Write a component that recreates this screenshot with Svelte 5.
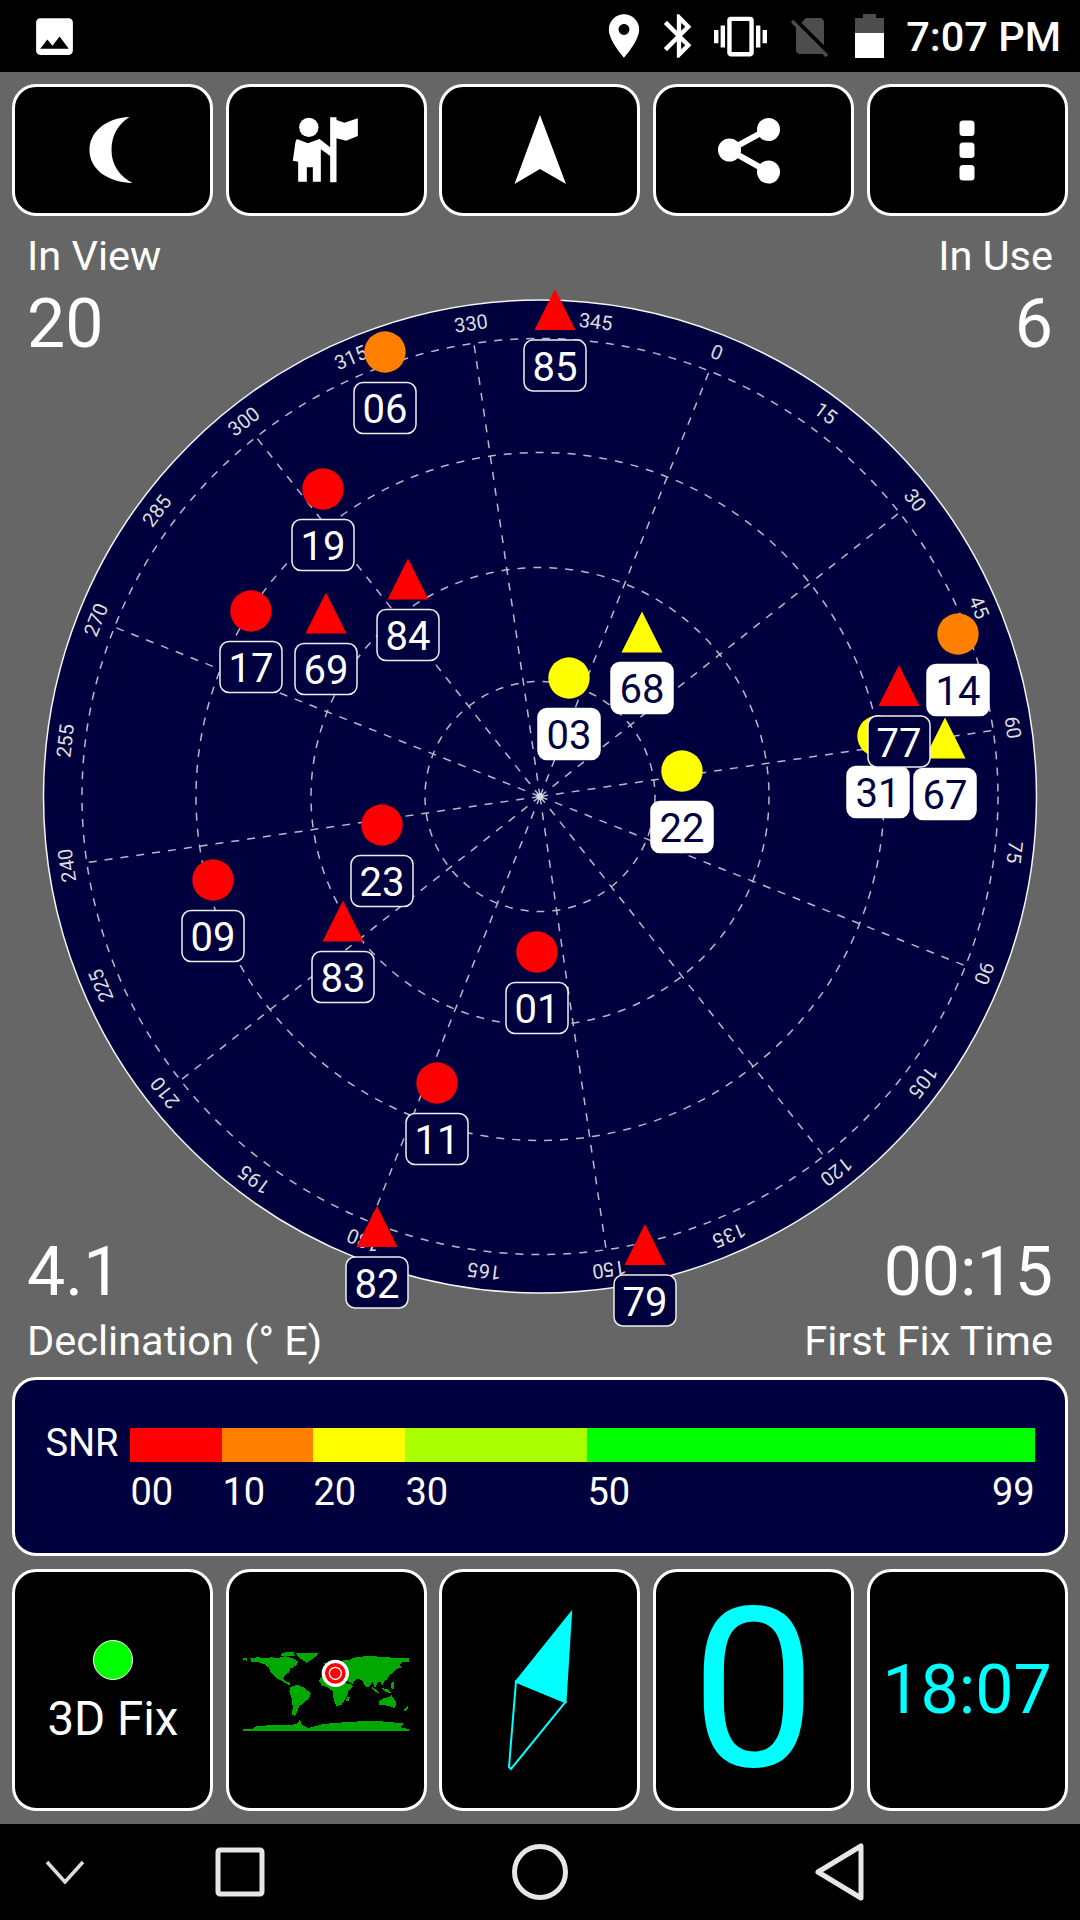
<script>
    const cx = 540;
    const cy = 796.5;
    const rot = 21.7;

    const rings = [115, 229, 344, 458];
    const spokes = Array.from({ length: 12 }, (_, i) => i * 30);
    const degrees = Array.from({ length: 24 }, (_, i) => i * 15);

    // shape: c = gps circle, t = glonass triangle. used = white label
    const sats = [
        { id: "06", x: 385, y: 352, c: "#ff8000", shape: "c" },
        { id: "85", x: 555, y: 309.5, c: "#ff0000", shape: "t" },
        { id: "19", x: 323, y: 489, c: "#ff0000", shape: "c" },
        { id: "17", x: 251, y: 611, c: "#ff0000", shape: "c" },
        { id: "69", x: 326, y: 613, c: "#ff0000", shape: "t" },
        { id: "84", x: 408, y: 579, c: "#ff0000", shape: "t" },
        { id: "68", x: 642, y: 632, c: "#ffff00", shape: "t", used: true },
        { id: "03", x: 569, y: 678, c: "#ffff00", shape: "c", used: true },
        { id: "22", x: 682, y: 771, c: "#ffff00", shape: "c", used: true },
        { id: "14", x: 958, y: 634, c: "#ff8000", shape: "c", used: true },
        { id: "31", x: 878, y: 736, c: "#ffff00", shape: "c", used: true },
        { id: "67", x: 945, y: 738, c: "#ffff00", shape: "t", used: true },
        { id: "77", x: 899, y: 685.5, c: "#ff0000", shape: "t" },
        { id: "23", x: 382, y: 825, c: "#ff0000", shape: "c" },
        { id: "09", x: 213, y: 880, c: "#ff0000", shape: "c" },
        { id: "83", x: 343, y: 921, c: "#ff0000", shape: "t" },
        { id: "01", x: 537, y: 952, c: "#ff0000", shape: "c" },
        { id: "11", x: 437, y: 1083, c: "#ff0000", shape: "c" },
        { id: "82", x: 377, y: 1226.5, c: "#ff0000", shape: "t" },
        { id: "79", x: 645, y: 1244.5, c: "#ff0000", shape: "t" }
    ];

    function tri(s) {
        return `${s.x},${s.y - 20.5} ${s.x - 20.5},${s.y + 20.5} ${s.x + 20.5},${s.y + 20.5}`;
    }

    const snr = [
        { label: "00", color: "#ff0000" },
        { label: "10", color: "#ff8000" },
        { label: "20", color: "#ffff00" },
        { label: "30", color: "#aaff00" },
        { label: "50", color: "#00ff00", end: "99" }
    ];

    const land = [
        "30,30 55,28 75,30 95,28 110,30 130,27 150,28 165,35 175,42 170,50 160,58 150,62 148,72 140,78 132,85 130,92 138,100 148,104 150,112 140,108 128,100 112,92 100,82 90,72 88,60 72,48 52,42 35,42",
        "168,14 235,14 228,25 215,35 200,45 190,38 178,30 172,22",
        "128,14 160,12 165,24 150,24 135,26 122,22",
        "10,30 22,30 22,38 10,36",
        "150,118 170,110 190,118 212,135 208,150 190,165 178,175 170,195 165,204 157,200 158,175 155,150 148,132",
        "252,45 275,42 330,35 345,28 385,24 420,26 470,30 506,30 506,42 488,42 478,50 485,60 470,62 462,72 450,80 440,95 432,100 428,112 420,100 412,105 405,120 398,100 388,115 378,118 368,100 358,92 345,95 338,108 322,100 310,90 270,90",
        "240,90 255,85 285,100 330,108 338,115 325,130 318,150 305,170 290,174 282,160 278,130 262,118 245,112 238,100",
        "322,148 330,145 326,160 318,158",
        "418,160 430,150 445,148 455,142 470,165 465,180 448,175 430,170 415,172",
        "395,115 408,125 420,135 412,135 398,125",
        "425,120 445,125 455,135 435,132",
        "452,105 462,102 462,125 455,122",
        "490,185 503,175 505,180 495,192",
        "45,236 100,230 150,232 172,226 180,214 185,230 205,240 250,228 320,222 400,218 490,226 482,238 506,243 506,249 10,249 10,243 40,242"
    ];
</script>

<div class="screen">
    <header class="status">
        <svg class="ic-image" viewBox="0 0 24 24"><path fill="#fff" d="M21 19V5c0-1.1-.9-2-2-2H5c-1.1 0-2 .9-2 2v14c0 1.1.9 2 2 2h14c1.1 0 2-.9 2-2zM8.5 13.5l2.5 3.01L14.5 12l4.5 6H5l3.5-4.5z"/></svg>
        <div class="status-right">
            <svg class="ic-pin" viewBox="0 0 24 24"><path fill="#fff" d="M12 2C8.13 2 5 5.13 5 9c0 5.25 7 13 7 13s7-7.75 7-13c0-3.87-3.13-7-7-7zm0 9.5c-1.38 0-2.5-1.12-2.5-2.5s1.12-2.5 2.5-2.5 2.5 1.12 2.5 2.5-1.12 2.5-2.5 2.5z"/></svg>
            <svg class="ic-bt" viewBox="0 0 24 24"><path fill="#fff" d="M17.71 7.71L12 2h-1v7.59L6.41 5 5 6.41 10.59 12 5 17.59 6.41 19 11 14.41V22h1l5.71-5.71-4.3-4.29 4.3-4.29zM13 5.83l1.88 1.88L13 9.59V5.83zm1.88 10.46L13 18.17v-3.76l1.88 1.88z"/></svg>
            <svg class="ic-vib" viewBox="0 0 24 24"><path fill="#fff" d="M0 15h2V9H0v6zm3 2h2V7H3v10zm19-8v6h2V9h-2zm-3 8h2V7h-2v10zM16.5 3h-9C6.67 3 6 3.67 6 4.5v15c0 .83.67 1.5 1.5 1.5h9c.83 0 1.5-.67 1.5-1.5v-15c0-.83-.67-1.5-1.5-1.5zM16 19H8V5h8v14z"/></svg>
            <svg class="ic-sim" viewBox="0 0 24 24"><path fill="#4d4d4d" d="M18.99 5c0-1.1-.89-2-1.99-2h-7L7.66 5.34 19 16.68 18.99 5zM3.65 3.88L2.38 5.15 5 7.77V19c0 1.1.9 2 2 2h10.01c.35 0 .67-.1.96-.26l1.88 1.88 1.27-1.27L3.65 3.88z"/></svg>
            <svg class="ic-batt" viewBox="0 0 29 44"><path fill="#4d4d4d" d="M8 0h13v4h8v15H0V4h8z"/><rect y="19" width="29" height="25" fill="#fff"/></svg>
            <span class="clock">7:07 PM</span>
        </div>
    </header>

    <nav class="tiles top">
        <button class="tile">
            <svg width="80" height="80" viewBox="72.500 110 80 80"><path fill="#fff" d="M129 117C105 118 89 132 89 150C89 168 105 182 132 183C119 176 111 165 111 150C111 135 118 124 129 117Z"/></svg>
        </button>
        <button class="tile">
            <svg width="80" height="80" viewBox="199.500 120 240 240"><circle cx="268" cy="172" r="29" fill="#fff"/><path fill="#fff" d="M232 207L265 220L300 207L332 232V258L304 238V335H280V292H262V335H236V275L220 272L228 215ZM332 142H351V150L375 158L415 145V198L380 212L351 205V337H332Z"/></svg>
        </button>
        <button class="tile">
            <svg width="80" height="80" viewBox="500 110 80 80"><path fill="#fff" d="M540 115L566 184L540 169L514.500 184Z"/></svg>
        </button>
        <button class="tile">
            <svg width="80" height="80" viewBox="713.500 110 80 80"><path stroke="#fff" stroke-width="6" fill="none" d="M768 129L729 150L768 172"/><circle cx="768" cy="129.500" r="11.500" fill="#fff"/><circle cx="729" cy="150" r="11.500" fill="#fff"/><circle cx="768" cy="172" r="11.500" fill="#fff"/></svg>
        </button>
        <button class="tile">
            <svg width="80" height="80" viewBox="927 110 80 80"><rect x="959.500" y="120.500" width="15" height="15.500" rx="3.500" fill="#fff"/><rect x="959.500" y="142.500" width="15" height="15.500" rx="3.500" fill="#fff"/><rect x="959.500" y="165" width="15" height="15.500" rx="3.500" fill="#fff"/></svg>
        </button>
    </nav>

    <section class="sky">
        <svg class="plot" viewBox="0 216 1080 1161">
            <circle {cx} {cy} r="496.5" fill="#00003f" stroke="#f4f4f4" stroke-width="1.5"/>
            {#each rings as r}
                <circle {cx} {cy} {r} class="grid"/>
            {/each}
            {#each spokes as a}
                <line x1={cx} y1={cy} x2={cx} y2={cy - 458} class="grid" transform="rotate({a + rot} {cx} {cy})"/>
            {/each}
            <circle {cx} {cy} r="3.5" fill="#d8d8e0"/>
            {#each degrees as d}
                <text x={cx} y={cy - 478} class="deg" transform="rotate({d + rot} {cx} {cy})">{d}</text>
            {/each}
            {#each sats as s}
                {#if s.shape === "c"}
                    <circle cx={s.x} cy={s.y} r="20.7" fill={s.c}/>
                {:else}
                    <polygon points={tri(s)} fill={s.c}/>
                {/if}
                <rect x={s.x - 31} y={s.y + 30.5} width="62" height="51" rx="9" class="badge" class:used={s.used}/>
                <text x={s.x} y={s.y + 71} class="prn" class:used={s.used}>{s.id}</text>
            {/each}
        </svg>
        <div class="readouts">
            <div class="pair">
                <div>
                    <div class="cap">In View</div>
                    <div class="big top-big">20</div>
                </div>
                <div class="right">
                    <div class="cap">In Use</div>
                    <div class="big top-big">6</div>
                </div>
            </div>
            <div class="pair">
                <div>
                    <div class="big low-big">4.1</div>
                    <div class="cap">Declination (° E)</div>
                </div>
                <div class="right">
                    <div class="big low-big">00:15</div>
                    <div class="cap">First Fix Time</div>
                </div>
            </div>
        </div>
    </section>

    <section class="snr">
        <div class="snr-row">
            <span class="snr-label">SNR</span>
            <div class="scale">
                {#each snr as seg}
                    <div class="seg" style="background: {seg.color}"></div>
                {/each}
                {#each snr as seg}
                    <div class="tick">
                        <span>{seg.label}</span>
                        {#if seg.end}<span>{seg.end}</span>{/if}
                    </div>
                {/each}
            </div>
        </div>
    </section>

    <section class="tiles bottom">
        <div class="tile fix">
            <span class="led"></span>
            <span class="fix-text">3D Fix</span>
        </div>
        <div class="tile">
            <svg class="map" width="172" height="88" viewBox="0 0 516 264">
                {#each land as pts}
                    <polygon points={pts} fill="#00a800" shape-rendering="crispEdges"/>
                {/each}
                <circle cx="286" cy="76" r="41" fill="#fff"/>
                <circle cx="286" cy="76" r="31" fill="#ff0000"/>
                <circle cx="286" cy="76" r="18" fill="none" stroke="#fff" stroke-width="4"/>
            </svg>
        </div>
        <div class="tile">
            <svg width="120" height="180" viewBox="479 1599 120 180">
                <polygon points="570,1612 515,1680.500 564.500,1701" fill="#0ff" stroke="#0ff" stroke-width="2"/>
                <polygon points="515,1680.500 564.500,1701 510,1768 508,1766" fill="none" stroke="#0ff" stroke-width="2"/>
            </svg>
        </div>
        <div class="tile"><span class="zero">0</span></div>
        <div class="tile"><span class="utc">18:07</span></div>
    </section>

    <footer class="navbar">
        <svg class="nav-down" width="40" height="24" viewBox="0 0 40 24"><path d="M2 2L20 22L38 2" fill="none" stroke="#ddd" stroke-width="3.500"/></svg>
        <div class="nav-cell"><svg width="52" height="52" viewBox="0 0 52 52"><rect x="4" y="4" width="44" height="44" rx="2" fill="none" stroke="#e6e6e6" stroke-width="5"/></svg></div>
        <div class="nav-cell"><svg width="60" height="60" viewBox="0 0 60 60"><circle cx="30" cy="30" r="25.500" fill="none" stroke="#e6e6e6" stroke-width="5"/></svg></div>
        <div class="nav-cell"><svg width="52" height="60" viewBox="0 0 52 60"><path d="M47 4V56L4 30Z" fill="none" stroke="#e6e6e6" stroke-width="5" stroke-linejoin="round"/></svg></div>
    </footer>
</div>

<style>
    :global(body) {
        margin: 0;
        background: #666;
    }
    .screen {
        width: 1080px;
        height: 1920px;
        display: flex;
        flex-direction: column;
        background: #666;
        font-family: Roboto, "Liberation Sans", sans-serif;
        color: #fff;
        overflow: hidden;
    }

    .status {
        height: 72px;
        flex: none;
        background: #000;
        display: flex;
        align-items: center;
        justify-content: space-between;
        padding: 0 19px 0 30px;
    }
    .status-right {
        display: flex;
        align-items: center;
    }
    .ic-image { width: 49px; height: 49px; }
    .ic-pin { width: 52px; height: 52px; }
    .ic-bt { width: 52px; height: 52px; margin-left: 3px; }
    .ic-vib { width: 53px; height: 53px; margin-left: 9px; }
    .ic-sim { width: 48px; height: 48px; margin-left: 19px; }
    .ic-batt { width: 29px; height: 44px; margin-left: 21px; }
    .clock {
        font-size: 41.5px;
        font-weight: 500;
        margin-left: 22px;
    }

    .tiles {
        flex: none;
        display: flex;
        justify-content: space-between;
        padding: 0 12.4px;
    }
    .tiles.top {
        margin-top: 12px;
        height: 132px;
    }
    .tiles.bottom {
        margin-top: 13px;
        height: 242px;
    }
    .tile {
        flex: 0 0 201px;
        box-sizing: border-box;
        padding: 0;
        border: 3px solid #fff;
        border-radius: 24px;
        background: #000;
        color: inherit;
        font: inherit;
        display: flex;
        align-items: center;
        justify-content: center;
    }

    .sky {
        position: relative;
        flex: 1;
    }
    .plot {
        position: absolute;
        left: 0;
        top: 0;
        width: 1080px;
        height: 1161px;
    }
    .grid {
        fill: none;
        stroke: #b8b8c8;
        stroke-width: 1.5;
        stroke-dasharray: 8 8;
    }
    .deg {
        font-size: 20px;
        fill: #ddd;
        text-anchor: middle;
        dominant-baseline: central;
    }
    .badge {
        fill: #00003f;
        stroke: #eee;
        stroke-width: 1.5;
    }
    .badge.used {
        fill: #fff;
        stroke: #fff;
    }
    .prn {
        font-size: 40px;
        fill: #fff;
        text-anchor: middle;
    }
    .prn.used {
        fill: #00003f;
    }

    .readouts {
        position: relative;
        height: 100%;
        box-sizing: border-box;
        padding: 15px 27px 11px 27px;
        display: flex;
        flex-direction: column;
        justify-content: space-between;
        pointer-events: none;
    }
    .pair {
        display: flex;
        justify-content: space-between;
    }
    .right {
        text-align: right;
    }
    .cap {
        font-size: 41.5px;
        line-height: 50px;
    }
    .big {
        font-size: 68px;
        line-height: 80px;
    }
    .top-big {
        margin-top: 3px;
    }
    .low-big {
        margin-bottom: 4px;
    }

    .snr {
        flex: none;
        box-sizing: border-box;
        height: 179px;
        margin: 0 12.4px;
        padding: 48px 30px 0;
        border: 3px solid #fff;
        border-radius: 24px;
        background: #00003f;
    }
    .snr-row {
        display: flex;
        align-items: flex-start;
    }
    .snr-label {
        flex: 0 0 85px;
        font-size: 38px;
        line-height: 30px;
    }
    .scale {
        flex: 1;
        display: grid;
        grid-template-columns: 92px 91px 92px 182px 1fr;
    }
    .seg {
        height: 34px;
    }
    .tick {
        display: flex;
        justify-content: space-between;
        font-size: 38px;
        line-height: 44px;
        margin-top: 8px;
    }

    .fix {
        flex-direction: column;
    }
    .led {
        width: 40px;
        height: 40px;
        box-sizing: border-box;
        border: 1px solid #fff;
        border-radius: 50%;
        background: #00ff00;
        margin-top: 6px;
    }
    .fix-text {
        font-size: 47.5px;
        line-height: 54px;
        margin-top: 12px;
    }
    .map {
        margin-top: 4px;
    }
    .zero {
        font-size: 222px;
        line-height: 1;
        color: #0ff;
    }
    .utc {
        font-size: 68px;
        color: #0ff;
    }

    .navbar {
        flex: none;
        height: 96px;
        margin-top: 13px;
        background: #000;
        display: flex;
        align-items: center;
    }
    .nav-down {
        flex: none;
        margin: 0 5px 0 45px;
    }
    .nav-cell {
        flex: 0 0 300px;
        display: flex;
        justify-content: center;
    }
</style>
